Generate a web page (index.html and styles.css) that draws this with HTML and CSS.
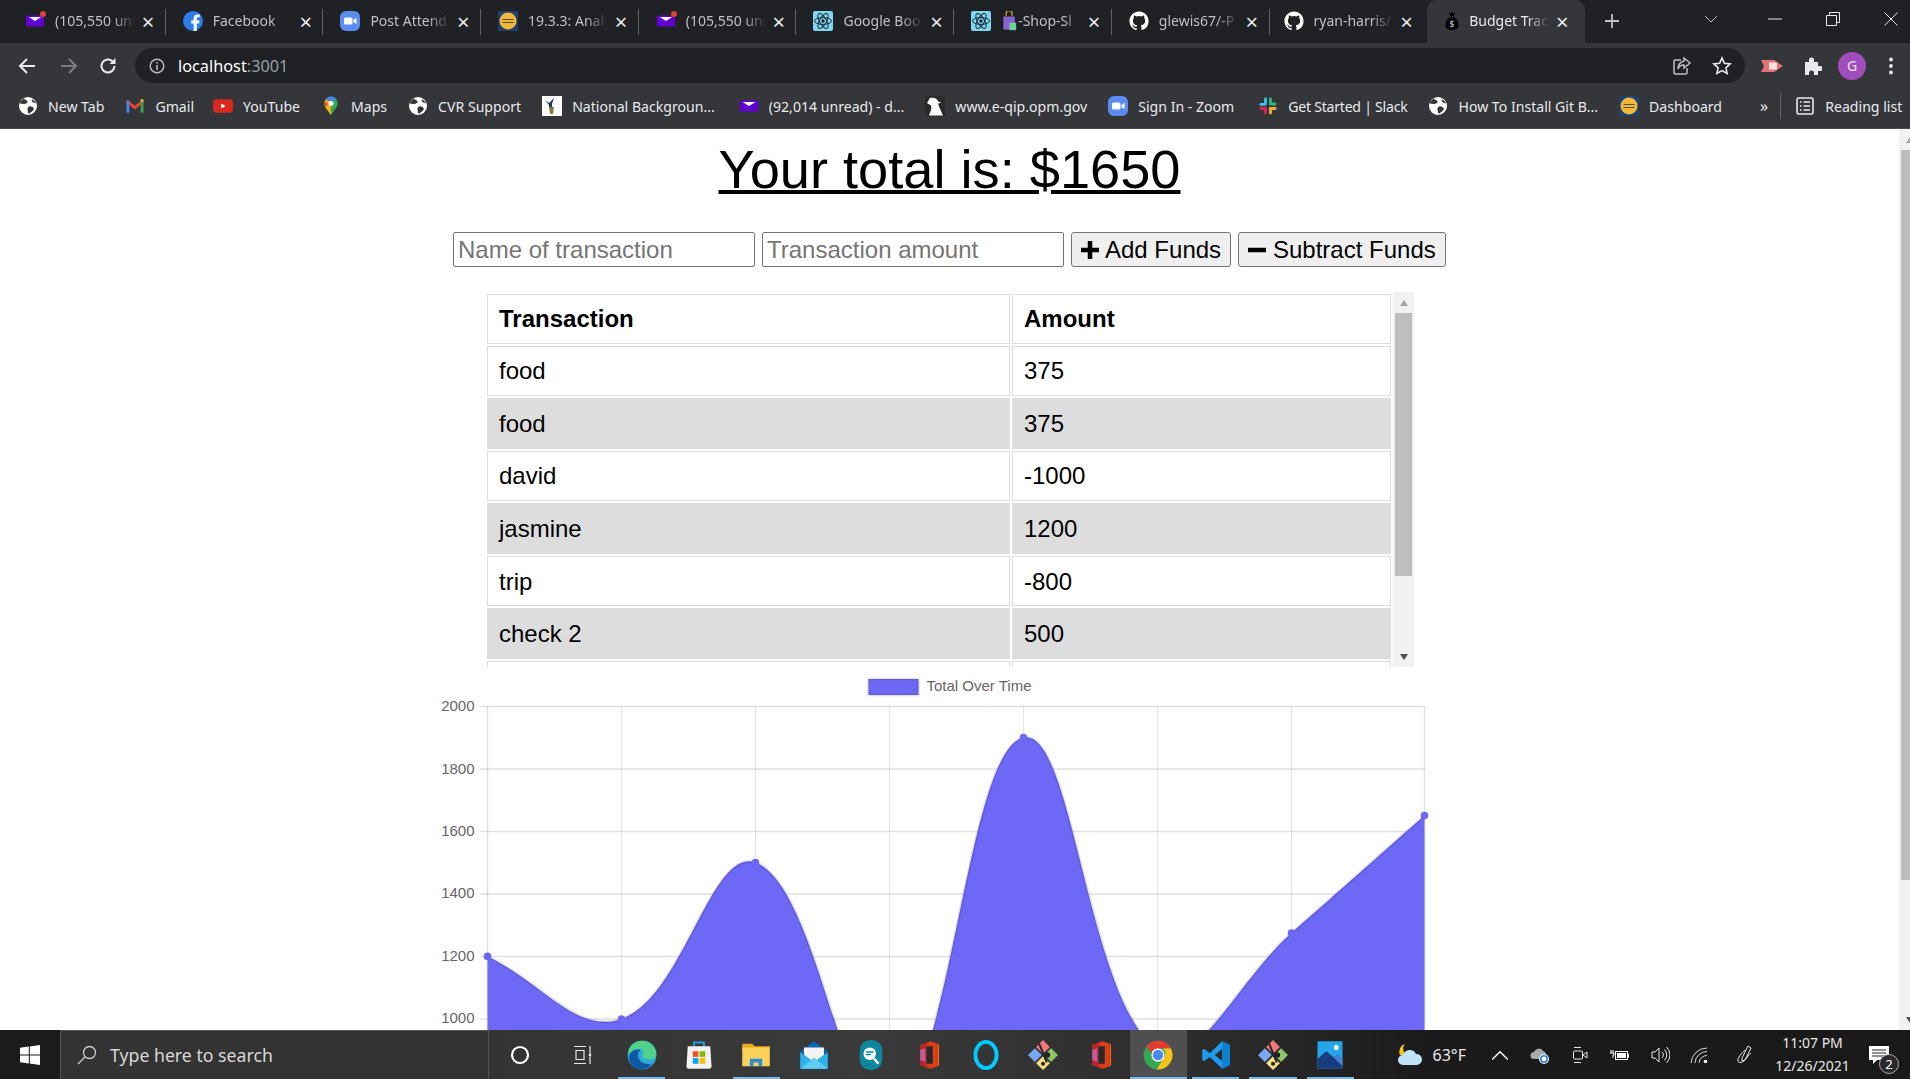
FILE: index.html
```html
<!DOCTYPE html>
<html lang="en">
  <head>
    <meta charset="UTF-8" />
    <title>Budget Tracker</title>
    <link rel="stylesheet" href="styles.css">
  </head>
  <body>
    <!-- shared icons -->
    <svg class="defs" aria-hidden="true">
      <symbol id="i-mail" viewBox="1 1 22 22"><rect x="2" y="6" width="20" height="12" fill="#6001d2"/><path d="M5 7.500h14l-7 4.500z" fill="#fff"/></symbol>
      <symbol id="i-zoom" viewBox="2 2 20 20"><rect x="2" y="2" width="20" height="20" rx="6" fill="#5b8cf0"/><rect x="6" y="8.500" width="8.500" height="7" rx="1.500" fill="#fff"/><path d="M15.500 11l3-2.200v6.400l-3-2.200z" fill="#fff"/></symbol>
      <symbol id="i-react" viewBox="2 2 20 20"><rect x="2" y="2" width="20" height="20" rx="2" fill="#7fd6f2"/><g fill="none" stroke="#1d2b33" stroke-width="1"><ellipse cx="12" cy="12" rx="8.500" ry="3.400"/><ellipse cx="12" cy="12" rx="8.500" ry="3.400" transform="rotate(60 12 12)"/><ellipse cx="12" cy="12" rx="8.500" ry="3.400" transform="rotate(120 12 12)"/></g><circle cx="12" cy="12" r="1.700" fill="#1d2b33"/></symbol>
      <symbol id="i-github" viewBox="0 0 24 24"><path fill="#fff" d="M12 .5C5.650.5.500 5.650.500 12c0 5.080 3.290 9.390 7.860 10.910.570.100.780-.250.780-.550v-1.930c-3.200.700-3.870-1.540-3.870-1.540-.520-1.330-1.280-1.680-1.280-1.680-1.050-.720.080-.700.080-.700 1.160.080 1.770 1.190 1.770 1.190 1.030 1.760 2.700 1.250 3.360.960.100-.750.400-1.250.730-1.540-2.550-.290-5.240-1.280-5.240-5.690 0-1.260.450-2.280 1.180-3.090-.120-.290-.510-1.460.110-3.050 0 0 .970-.310 3.170 1.180a11 11 0 0 1 5.780 0c2.200-1.490 3.170-1.180 3.170-1.180.630 1.590.230 2.760.110 3.050.740.810 1.180 1.830 1.180 3.090 0 4.420-2.690 5.390-5.250 5.680.410.360.780 1.050.780 2.120v3.140c0 .310.210.660.790.550A11.500 11.500 0 0 0 23.500 12C23.500 5.650 18.350.5 12 .5z"/></symbol>
      <symbol id="i-school" viewBox="2 2 20 20"><rect x="2" y="2" width="20" height="20" fill="#22406e"/><circle cx="12" cy="12" r="8.500" fill="#f0b93a"/><path d="M6.500 10.500h11M6.500 13.500h11" stroke="#5a4a20" stroke-width="1.200"/></symbol>
      <symbol id="i-globe" viewBox="2 2 20 20"><circle cx="12" cy="12" r="9" fill="#fff"/><path d="M8 4.500c1 1.500 3 1.500 3.500 3S9.500 10 8 10 5 9.500 3.500 9.500C4 7.500 6 5.500 8 4.500zM13 12.500c2-.500 3.500.500 4.500 1.500s-.500 3-2 4-2.500 2-3 1.500-.500-2-1-3.500.500-3 1.500-3.500zM16 5.500c1.500.500 3 2 4 3.500-1 .500-2.500 0-3.500-1s-1-2-.500-2.500z" fill="#35363a"/></symbol>
      <symbol id="i-office" viewBox="0 0 24 24"><path d="M13 1l7 2.500v17L13 23l6-2V3z" fill="#ff6a1a"/><path d="M13 1L5 4v16l8 3 6-2V3z" fill="#dc3e15"/><path d="M13 1L5 4v16l8 3-3-2.500V3.500z" fill="#b3262c"/><path d="M5 8l4-1.500v11L5 16z" fill="#c75a98"/><rect x="10" y="5" width="5" height="14" fill="#2a2a2a"/></symbol>
      <symbol id="i-git" viewBox="0 0 24 24"><path d="M12 0l5.500 5.500L12 11 6.500 5.500z" fill="#f0787a"/><path d="M0 12l5.500-5.500L11 12l-5.500 5.500z" fill="#7aa7f5"/><path d="M24 12l-5.500-5.500L13 12l5.500 5.500z" fill="#8cc665"/><path d="M12 24l-5.500-5.500L12 13l5.500 5.500z" fill="#f6df84"/><path d="M9 3l6 15" stroke="#222" stroke-width="1.600"/><circle cx="15.500" cy="12" r="2.200" fill="#222"/><circle cx="12" cy="19" r="1.600" fill="#222"/></symbol>
    </svg>

    <div class="tabstrip">
      <div class="tab">
        <svg class="fav"><use href="#i-mail"/></svg><i class="mail-dot"></i>
        <span class="tab-title">(105,550 unr</span><span class="tab-close">×</span>
      </div>
      <div class="tab">
        <svg class="fav" viewBox="0 0 24 24"><circle cx="12" cy="12" r="12" fill="#2f7bea"/><path d="M16.500 24V15h2.800l.500-3.600h-3.300V9.300c0-1 .400-1.800 1.800-1.800H20V4.300c-.300 0-1.400-.1-2.700-.1-2.700 0-4.500 1.600-4.500 4.600v2.600H9.800V15h3v9z" fill="#fff"/></svg>
        <span class="tab-title">Facebook</span><span class="tab-close">×</span>
      </div>
      <div class="tab">
        <svg class="fav"><use href="#i-zoom"/></svg>
        <span class="tab-title">Post Attend</span><span class="tab-close">×</span>
      </div>
      <div class="tab">
        <svg class="fav"><use href="#i-school"/></svg>
        <span class="tab-title">19.3.3: Analy</span><span class="tab-close">×</span>
      </div>
      <div class="tab">
        <svg class="fav"><use href="#i-mail"/></svg><i class="mail-dot"></i>
        <span class="tab-title">(105,550 unr</span><span class="tab-close">×</span>
      </div>
      <div class="tab">
        <svg class="fav"><use href="#i-react"/></svg>
        <span class="tab-title">Google Boo</span><span class="tab-close">×</span>
      </div>
      <div class="tab tab-shop">
        <svg class="fav"><use href="#i-react"/></svg>
        <svg class="bag" viewBox="0 0 20 24"><path d="M2 6h15v17H2z" fill="#8a63d2" stroke="#111"/><path d="M10 14h8v9h-8z" fill="#6fcf97"/><path d="M6 6V3a3 3 0 0 1 7 0v3" fill="none" stroke="#c9a227" stroke-width="1.500"/></svg>
        <span class="tab-title">-Shop-Sl</span><span class="tab-close">×</span>
      </div>
      <div class="tab">
        <svg class="fav"><use href="#i-github"/></svg>
        <span class="tab-title">glewis67/-P</span><span class="tab-close">×</span>
      </div>
      <div class="tab tab-nosep">
        <svg class="fav"><use href="#i-github"/></svg>
        <span class="tab-title">ryan-harris/</span><span class="tab-close">×</span>
      </div>
      <div class="tab tab-active">
        <svg class="fav" viewBox="0 0 24 24"><path d="M8.500 2h7l-1.500 4h-4zM9.500 7h5c3 2.500 5.500 6 5.500 10 0 4-3 5.500-8 5.500S4 21 4 17c0-4 2.500-7.500 5.500-10z" fill="#000"/><text class="bag-sign" x="12" y="19" text-anchor="middle">$</text></svg>
        <span class="tab-title">Budget Trac</span><span class="tab-close">×</span>
      </div>
      <svg class="new-tab" viewBox="0 0 14 14"><path d="M7 0v14M0 7h14" stroke="#bdc1c6" stroke-width="1.800"/></svg>
      <div class="window-controls">
        <svg class="win-btn win-down" viewBox="0 0 14 8"><path d="M1 1l6 6 6-6" fill="none" stroke="#bdc1c6"/></svg>
        <svg class="win-btn" viewBox="0 0 14 14"><path d="M0 7h14" stroke="#e8eaed"/></svg>
        <svg class="win-btn" viewBox="0 0 14 14"><path d="M.5 3.500h10v10H.5zM3.500 3.500v-3h10v10h-3" fill="none" stroke="#e8eaed"/></svg>
        <svg class="win-btn" viewBox="0 0 14 14"><path d="M.5.500l13 13M13.500.500l-13 13" stroke="#e8eaed"/></svg>
      </div>
    </div>

    <div class="toolbar">
      <svg class="tool" viewBox="0 0 18 18"><path d="M17 9H2M9 2L2 9l7 7" fill="none" stroke="#e8eaed" stroke-width="2"/></svg>
      <svg class="tool" viewBox="0 0 18 18"><path d="M1 9h15M9 2l7 7-7 7" fill="none" stroke="#7b7e83" stroke-width="2"/></svg>
      <svg class="tool" viewBox="0 0 18 18"><path d="M15.500 9a6.500 6.500 0 1 1-2-4.700" fill="none" stroke="#e8eaed" stroke-width="2"/><path d="M16.500 1v6h-6z" fill="#e8eaed"/></svg>
      <div class="omnibox">
        <svg class="omni-info" viewBox="0 0 16 16"><circle cx="8" cy="8" r="6.800" fill="none" stroke="#bdc1c6" stroke-width="1.400"/><path d="M8 7v5M8 4v1.600" stroke="#bdc1c6" stroke-width="1.500"/></svg>
        <span class="url">localhost<span class="url-port">:3001</span></span>
        <svg class="omni-share" viewBox="0 0 20 20"><path d="M9 4H3.500A1.500 1.500 0 0 0 2 5.500v11A1.500 1.500 0 0 0 3.500 18h10a1.500 1.500 0 0 0 1.500-1.500V12" fill="none" stroke="#bdc1c6" stroke-width="1.500"/><path d="M12 2l6 5-6 5V9c-3 0-5 1-6 4 0-4 2-7 6-8z" fill="none" stroke="#bdc1c6" stroke-width="1.500"/></svg>
        <svg class="omni-star" viewBox="0 0 20 20"><path d="M10 2l2.400 5.300 5.800.6-4.300 3.900 1.200 5.700-5.100-2.900-5.100 2.900 1.200-5.700L1.800 7.900l5.800-.6z" fill="none" stroke="#e8eaed" stroke-width="1.600"/></svg>
      </div>
      <svg class="ext-rec" viewBox="0 0 22 18"><path d="M0 3h10l3 0 9 6-9 6-3 0H0l3-6z" fill="#e57373"/><rect x="8" y="5.500" width="8" height="7" fill="#fbe3e3"/></svg>
      <svg class="ext-puzzle" viewBox="0 0 20 20"><path d="M3 6h4V4a2.500 2.500 0 0 1 5 0v2h4v4h2a2.500 2.500 0 0 1 0 5h-2v4H12v-2a2.500 2.500 0 0 0-5 0v2H3z" fill="#e8eaed"/></svg>
      <span class="avatar">G</span>
      <svg class="kebab" viewBox="0 0 4 18"><circle cx="2" cy="2.500" r="1.900" fill="#e8eaed"/><circle cx="2" cy="9" r="1.900" fill="#e8eaed"/><circle cx="2" cy="15.500" r="1.900" fill="#e8eaed"/></svg>
    </div>

    <div class="bookmarks">
      <a class="bm"><svg class="bm-ico"><use href="#i-globe"/></svg>New Tab</a>
      <a class="bm bm-near"><svg class="bm-ico" viewBox="0 0 24 24"><path d="M2 6l10 8 10-8" fill="none" stroke="#ea4335" stroke-width="3.500"/><path d="M3.500 6v14" stroke="#4285f4" stroke-width="3.500"/><path d="M20.500 6v14" stroke="#34a853" stroke-width="3.500"/><path d="M19 4.500l3 1.500" stroke="#fbbc04" stroke-width="3"/></svg>Gmail</a>
      <a class="bm"><svg class="bm-ico" viewBox="0 0 24 24"><rect x="0" y="4" width="24" height="16" rx="4" fill="#d9281e"/><path d="M10 9l5 3-5 3z" fill="#fff"/></svg>YouTube</a>
      <a class="bm"><svg class="bm-ico" viewBox="0 0 24 24"><path d="M12 1a8 8 0 0 0-8 8c0 5 5 9 8 14z" fill="#f5b400"/><path d="M12 1a8 8 0 0 1 8 8c0 5-5 9-8 14z" fill="#34a853"/><path d="M6 3.500A8 8 0 0 1 18 3l-2.500 3h-7z" fill="#4285f4"/><path d="M4.400 6.500l4 3L6 13c-1.500-2-2.500-4-1.600-6.500z" fill="#ea4335"/><circle cx="12" cy="9" r="3" fill="#fff"/></svg>Maps</a>
      <a class="bm"><svg class="bm-ico"><use href="#i-globe"/></svg>CVR Support</a>
      <a class="bm bm-far"><svg class="bm-ico" viewBox="2 2 20 20"><rect x="2" y="2" width="20" height="20" fill="#fff"/><path d="M5 6l4 3 5-5-2 6v4h-3v-3z" fill="#1f3864"/><path d="M9 13h5l-1 7h-3z" fill="#8a7a3a"/></svg>National Backgroun...</a>
      <a class="bm"><svg class="bm-ico"><use href="#i-mail"/></svg>(92,014 unread) - d...</a>
      <a class="bm"><svg class="bm-ico" viewBox="2 2 20 20"><rect x="2" y="2" width="20" height="20" fill="#2a2a2c"/><path d="M7 4c3-1 7 0 8 3l3 2-3 .5c1 4 4 9 5 12H6c1-3 3-6 2-10L4 9z" fill="#fff"/></svg>www.e-qip.opm.gov</a>
      <a class="bm bm-far"><svg class="bm-ico"><use href="#i-zoom"/></svg>Sign In - Zoom</a>
      <a class="bm bm-tight"><svg class="bm-ico" viewBox="0 0 24 24"><g stroke-width="3.500" stroke-linecap="round"><path d="M9 3.500v5" stroke="#36c5f0" /><path d="M3.500 10h5" stroke="#36c5f0"/><path d="M15 3.500v6" stroke="#2eb67d"/><path d="M15.500 9.500h5" stroke="#2eb67d"/><path d="M15 15h5.500" stroke="#ecb22e"/><path d="M15 15v5.500" stroke="#ecb22e"/><path d="M3.500 15H9" stroke="#e01e5a"/><path d="M9 15v5.500" stroke="#e01e5a"/></g></svg>Get Started | Slack</a>
      <a class="bm"><svg class="bm-ico"><use href="#i-globe"/></svg>How To Install Git B...</a>
      <a class="bm"><svg class="bm-ico"><use href="#i-school"/></svg>Dashboard</a>
      <span class="bm-more">»</span>
      <span class="bm-sep"></span>
      <a class="bm bm-reading"><svg class="bm-ico" viewBox="0 0 20 20"><rect x="2" y="2" width="16" height="16" rx="1.500" fill="none" stroke="#e8eaed" stroke-width="1.600"/><path d="M5 6h1.500M8.500 6H15M5 10h1.500M8.500 10H15M5 14h1.500M8.500 14H15" stroke="#e8eaed" stroke-width="1.500"/></svg>Reading list</a>
    </div>

    <div class="viewport">
      <main class="page">
        <h1 class="total">Your total is: $<span>1650</span></h1>

        <form class="entry-form">
          <input class="entry-input" type="text" placeholder="Name of transaction" />
          <input class="entry-input" type="text" placeholder="Transaction amount" />
          <button class="entry-btn btn-add" type="button"><svg class="btn-ico" viewBox="0 0 18 18"><path d="M9 0v18M0 9h18" stroke="#000" stroke-width="4.500"/></svg>Add Funds</button>
          <button class="entry-btn btn-sub" type="button"><svg class="btn-ico" viewBox="0 0 18 18"><path d="M0 9h18" stroke="#000" stroke-width="4.500"/></svg>Subtract Funds</button>
        </form>

        <div class="table-wrap">
          <div class="table-scroll">
            <table class="tx-table">
              <thead>
                <tr><th>Transaction</th><th>Amount</th></tr>
              </thead>
              <tbody>
                <tr><td>food</td><td>375</td></tr>
                <tr><td>food</td><td>375</td></tr>
                <tr><td>david</td><td>-1000</td></tr>
                <tr><td>jasmine</td><td>1200</td></tr>
                <tr><td>trip</td><td>-800</td></tr>
                <tr><td>check 2</td><td>500</td></tr>
                <tr><td></td><td></td></tr>
                <tr><td></td><td></td></tr>
              </tbody>
            </table>
          </div>
          <div class="vbar vbar-table">
            <span class="vbar-btn"><i class="arrow-up"></i></span>
            <span class="vbar-thumb"></span>
            <span class="vbar-rest"></span>
            <span class="vbar-btn"><i class="arrow-down"></i></span>
          </div>
        </div>

        <svg class="chart" viewBox="429.500 670 1040 553">
          <rect class="legend-box" x="868" y="679" width="50" height="16"/>
          <text class="legend-text" x="926" y="691">Total Over Time</text>

          <g class="grid-v">
            <path d="M621 706V1144M755 706V1144M889 706V1144M1023 706V1144M1157 706V1144M1291 706V1144"/>
          </g>
          <g class="grid-h">
            <path d="M479 706.500H1424M479 769H1424M479 831.500H1424M479 894H1424M479 956.500H1424M479 1019H1424M479 1081.500H1424M479 1144H1424"/>
            <path d="M487 706V1152M1424 706V1144"/>
          </g>
          <g class="axis-labels">
            <text x="474" y="711">2000</text>
            <text x="474" y="774">1800</text>
            <text x="474" y="836">1600</text>
            <text x="474" y="898">1400</text>
            <text x="474" y="961">1200</text>
            <text x="474" y="1023">1000</text>
          </g>

          <path class="area" d="M487 956.400C540.600 981.400 576.200 1034.700 621 1019C683.400 997.100 710 846.700 755 862.500C817.200 884.300 844.500 1133.700 889 1112.900C951.700 1083.600 965.100 751 1023 737.500C1072.300 726 1086.500 998.900 1157 1050.300C1193.700 1077.100 1237.600 979.900 1291 933C1344.400 886.100 1370.800 862.600 1424 815.600V1144H487Z"/>
          <path class="area-line" d="M487 956.400C540.600 981.400 576.200 1034.700 621 1019C683.400 997.100 710 846.700 755 862.500C817.200 884.300 844.500 1133.700 889 1112.900C951.700 1083.600 965.100 751 1023 737.500C1072.300 726 1086.500 998.900 1157 1050.300C1193.700 1077.100 1237.600 979.900 1291 933C1344.400 886.100 1370.800 862.600 1424 815.600"/>
          <g class="points">
            <circle cx="487" cy="956.400" r="3.800"/>
            <circle cx="621" cy="1019" r="3.800"/>
            <circle cx="755" cy="862.500" r="3.800"/>
            <circle cx="889" cy="1112.900" r="3.800"/>
            <circle cx="1023" cy="737.500" r="3.800"/>
            <circle cx="1157" cy="1050.300" r="3.800"/>
            <circle cx="1291" cy="933" r="3.800"/>
            <circle cx="1424" cy="815.600" r="3.800"/>
          </g>
        </svg>
      </main>

      <!-- page scrollbar runs off the right edge of the shot -->
      <div class="page-bar">
        <div class="vbar vbar-page">
          <span class="vbar-btn"><i class="arrow-up"></i></span>
          <span class="vbar-thumb"></span>
          <span class="vbar-rest"></span>
          <span class="vbar-btn"><i class="arrow-down"></i></span>
        </div>
      </div>
    </div>

    <div class="taskbar">
      <div class="start">
        <svg class="start-logo" viewBox="0 0 20 20"><path d="M0 2.800l8.800-1.200v8H0zM9.800 1.400L20 0v9.600H9.800zM0 10.600h8.800v7.900L0 17.300zM9.800 10.600H20V20L9.800 18.600z" fill="#fff"/></svg>
      </div>
      <div class="search">
        <svg class="search-ico" viewBox="0 0 20 20"><circle cx="12.500" cy="7.500" r="6" fill="none" stroke="#d0d0d0" stroke-width="1.300"/><path d="M8 12l-7 7" stroke="#d0d0d0" stroke-width="1.300"/></svg>
        <span class="search-text">Type here to search</span>
      </div>
      <div class="task-cell"><svg class="task-ico-sm" viewBox="0 0 20 20"><circle cx="10" cy="10" r="8" fill="none" stroke="#fff" stroke-width="2.200"/></svg></div>
      <div class="task-cell"><svg class="task-ico-sm" viewBox="0 0 20 20"><path d="M2 1.500h12M2 18.500h12M4 5.500h8v9H4zM18 1v8M18 12v7" fill="none" stroke="#e8e8e8" stroke-width="1.200"/><rect x="16.800" y="9" width="2.400" height="2.400" fill="#e8e8e8"/></svg></div>

      <div class="task-cell is-open"><svg class="task-ico" viewBox="0 0 24 24"><circle cx="12" cy="12" r="11.500" fill="#2fa9dc"/><path d="M12 .500C19 .500 23.500 5.500 23.500 11c0 3-3 4.500-6 4.500s-5-1-5-3c0-2 1.500-3 1.500-3C11 6 4 7 1.500 13 0 6 5 .500 12 .500z" fill="#4ed18a"/><path d="M1.500 13C3 8 8 7 11 8c-3 2-3 6 0 9 2 2 6 3 9 1.500-2 3-5 5-8.500 5C6 23.500 1.500 19 1.500 13z" fill="#0c59a4"/></svg></div>
      <div class="task-cell"><svg class="task-ico" viewBox="0 0 24 24"><path d="M8 6V2h8v4" fill="none" stroke="#1fa2e0" stroke-width="1.500"/><path d="M3 5h18l1 16a2 2 0 0 1-2 2H4a2 2 0 0 1-2-2z" fill="#f3f3f3"/><rect x="7" y="9" width="4.500" height="4.500" fill="#f25022"/><rect x="12.500" y="9" width="4.500" height="4.500" fill="#7fba00"/><rect x="7" y="14.500" width="4.500" height="4.500" fill="#00a4ef"/><rect x="12.500" y="14.500" width="4.500" height="4.500" fill="#ffb900"/></svg></div>
      <div class="task-cell is-open"><svg class="task-ico" viewBox="0 0 24 24"><path d="M1 3h8l2 2h12v3H1z" fill="#e8a81e"/><rect x="1" y="6" width="22" height="15" fill="#fbd35c"/><path d="M7 21v-6h10v6h-3v-3h-4v3z" fill="#2c8fd6"/></svg></div>
      <div class="task-cell"><svg class="task-ico" viewBox="0 0 24 24"><path d="M12 1l11 8v14H1V9z" fill="#0b62b0"/><path d="M4 6h16v6l-8 6-8-6z" fill="#f4f4f4"/><path d="M1 10l11 8 11-8v13H1z" fill="#29b4ee"/><path d="M1 23l11-9 11 9z" fill="#5fcbf5"/></svg></div>
      <div class="task-cell"><svg class="task-ico" viewBox="0 0 24 24"><rect x="3" y="0" width="18" height="24" rx="8" fill="#0f859e"/><circle cx="11" cy="11" r="5" fill="#fff"/><path d="M8 9.500h6M8 11.500h4" stroke="#0f859e" stroke-width="1.200"/><path d="M14.500 15l3.500 4" stroke="#fff" stroke-width="2"/></svg></div>
      <div class="task-cell"><svg class="task-ico"><use href="#i-office"/></svg></div>
      <div class="task-cell"><svg class="task-ico" viewBox="0 0 24 24"><ellipse cx="12" cy="12" rx="8.500" ry="10.500" fill="none" stroke="#00caff" stroke-width="3"/><path d="M9 22l3 2 .5-3z" fill="#00caff"/></svg></div>
      <div class="task-cell"><svg class="task-ico"><use href="#i-git"/></svg></div>
      <div class="task-cell"><svg class="task-ico"><use href="#i-office"/></svg></div>
      <div class="task-cell is-open is-active"><svg class="task-ico" viewBox="0 0 24 24"><circle cx="12" cy="12" r="11.500" fill="#34a853"/><path d="M12 .500a11.500 11.500 0 0 1 10.300 6.300H12a5.200 5.200 0 0 0-5 3.500L2.700 5.300A11.500 11.500 0 0 1 12 .500z" fill="#e33b2e"/><path d="M22.300 6.800A11.500 11.500 0 0 1 11 23.500l5-8.500a5.200 5.200 0 0 0 0-8.200z" fill="#fbc116"/><circle cx="12" cy="12" r="5.300" fill="#fff"/><circle cx="12" cy="12" r="4.200" fill="#4a8af4"/></svg></div>
      <div class="task-cell is-open"><svg class="task-ico" viewBox="0 0 24 24"><path d="M17 1l6 3v16l-6 3-10-9.500L2.500 17 1 16v-8l1.500-1L7 10.500zM17 7l-6 5 6 5z" fill="#1f9cf0"/><path d="M17 1l6 3v16l-6 3z" fill="#0f7fcf"/></svg></div>
      <div class="task-cell is-open"><svg class="task-ico"><use href="#i-git"/></svg></div>
      <div class="task-cell is-open"><svg class="task-ico" viewBox="0 0 24 24"><rect x="2" y="1" width="20" height="22" fill="#25a4e8"/><path d="M2 23V15l7-6 6 5 3-2 4 4v7z" fill="#173d80"/><path d="M15 14l3-2 4 4v5z" fill="#4a7ed0"/><ellipse cx="17" cy="6" rx="1.800" ry="2.200" fill="#fff"/></svg></div>

      <div class="tray">
        <div class="tray-weather">
          <svg class="weather-ico" viewBox="0 0 28 24"><path d="M9 1a7 7 0 0 0 2 11l-7 0a8 8 0 0 1 5-11z" fill="#f5c518"/><path d="M7 22a5 5 0 0 1 0-10 7 7 0 0 1 13-1 5.500 5.500 0 0 1 1 11z" fill="#bfe3f7"/></svg>
          <span>63°F</span>
        </div>
        <div class="tray-cell"><svg class="tray-ico" viewBox="0 0 18 18"><path d="M2 13l7-7 7 7" fill="none" stroke="#fff" stroke-width="1.300"/></svg></div>
        <div class="tray-cell"><svg class="tray-ico" viewBox="0 0 20 20"><path d="M4 14a3.500 3.500 0 0 1 0-7 5 5 0 0 1 9-1 4 4 0 0 1 3 3v5z" fill="#a9a9a9"/><circle cx="14" cy="14" r="5" fill="#fff"/><circle cx="14" cy="14" r="3.200" fill="none" stroke="#1b78d0" stroke-width="1.500"/></svg></div>
        <div class="tray-cell"><svg class="tray-ico" viewBox="0 0 18 20"><path d="M3 2.500h7M3 17.500h7" stroke="#e8e8e8"/><rect x="2.500" y="6" width="9" height="8" rx="1" fill="none" stroke="#e8e8e8"/><path d="M12 10l4-3v6z" fill="none" stroke="#e8e8e8"/></svg></div>
        <div class="tray-cell"><svg class="tray-ico" viewBox="0 0 20 16"><path d="M1 3v3M3 3v3M0 6h4v2H3v3" fill="none" stroke="#fff"/><rect x="5.500" y="4.500" width="12" height="8" fill="none" stroke="#fff"/><rect x="7" y="6" width="9" height="5" fill="#fff"/><path d="M18.500 6.500v4" stroke="#fff"/></svg></div>
        <div class="tray-cell"><svg class="tray-ico" viewBox="0 0 20 20"><path d="M2 7h3l4-4v14l-4-4H2z" fill="none" stroke="#e8e8e8"/><path d="M12 7a4 4 0 0 1 0 6M14.500 4.500a8 8 0 0 1 0 11M16.500 2a11 11 0 0 1 0 16" fill="none" stroke="#e8e8e8"/></svg></div>
        <div class="tray-cell"><svg class="tray-ico" viewBox="0 0 20 20"><path d="M1 18A16 16 0 0 1 17 3M5 18A12 12 0 0 1 17 6.500M9 18a8 8 0 0 1 8-7.500" fill="none" stroke="#d8d8d8"/><circle cx="15.500" cy="16.500" r="1.800" fill="#fff"/></svg></div>
        <div class="tray-cell tray-pen"><svg class="tray-ico" viewBox="0 0 20 20"><path d="M13 1l3 2-6 12-3 1 0-3zM10 5c-3 3-8 8-7 11s5 1 7-1 4-6 6-7" fill="none" stroke="#e8e8e8"/></svg></div>
        <div class="clock"><span>11:07 PM</span><span>12/26/2021</span></div>
        <div class="notif">
          <svg class="notif-ico" viewBox="0 0 20 20"><path d="M0 1h20v14H8l-4 4v-4H0z" fill="#fff"/><path d="M3 5h14M3 8h14M3 11h14" stroke="#222"/></svg>
          <span class="notif-badge">2</span>
        </div>
      </div>
    </div>
  </body>
</html>
```

FILE: styles.css
```css
* {
  box-sizing: border-box;
}

html,
body {
  margin: 0;
  height: 100%;
  overflow: hidden;
}

body {
  display: flex;
  flex-direction: column;
  font-family: "Liberation Sans", Arial, sans-serif;
  background: #fff;
}

.defs {
  position: absolute;
  width: 0;
  height: 0;
}

/* browser tabs */
.tabstrip {
  flex: 0 0 43px;
  display: flex;
  align-items: center;
  padding-left: 8px;
  background: #202124;
  font-family: "Noto Sans", sans-serif;
}

.tab {
  position: relative;
  flex: 0 0 157.700px;
  height: 43px;
  display: flex;
  align-items: center;
  padding: 0 0 2px 17px;
  color: #bdc1c6;
  font-size: 14px;
}

.tab::after {
  content: "";
  position: absolute;
  right: 0;
  top: 9px;
  width: 1px;
  height: 26px;
  background: #5f6368;
}

.tab-nosep {
  padding-left: 14px;
}

.tab-nosep::after,
.tab-active::after {
  display: none;
}

.tab-active {
  padding-left: 15px;
  background: #35363a;
  border-radius: 10px 10px 0 0;
  color: #e8eaed;
}

.tab-active .tab-title {
  margin-left: 7px;
}

.fav {
  flex: 0 0 20px;
  width: 20px;
  height: 20px;
}

.mail-dot {
  position: absolute;
  left: 32px;
  top: 11px;
  width: 6px;
  height: 6px;
  border-radius: 50%;
  background: #e0403a;
}

.tab-title {
  flex: 0 0 82px;
  margin-left: 10px;
  overflow: hidden;
  white-space: nowrap;
  -webkit-mask-image: linear-gradient(to right, #000 70%, transparent 98%);
  mask-image: linear-gradient(to right, #000 70%, transparent 98%);
}

.tab-close {
  flex: 0 0 20px;
  margin-left: 1px;
  text-align: center;
  color: #e8eaed;
  font-size: 22px;
  line-height: 20px;
}

.tab-shop .bag {
  flex: 0 0 17px;
  width: 17px;
  height: 20px;
  margin-left: 10px;
}

.tab-shop .tab-title {
  flex-basis: 65px;
  margin-left: 0;
}

.bag-sign {
  fill: #ddd;
  font-size: 10px;
}

.new-tab {
  width: 14px;
  height: 14px;
  margin: 0 0 2px 20px;
}

.window-controls {
  margin-left: auto;
  display: flex;
  align-items: center;
  align-self: flex-start;
  height: 37px;
}

.win-btn {
  width: 14px;
  height: 14px;
  margin-right: 44px;
}

.win-down {
  margin-right: 50px;
  height: 8px;
}

.window-controls .win-btn:last-child {
  margin-right: 12px;
}

/* address bar row */
.toolbar {
  flex: 0 0 45px;
  display: flex;
  align-items: center;
  padding-left: 18px;
  background: #35363a;
}

.tool {
  width: 18px;
  height: 18px;
  margin-right: 24px;
}

.tool:nth-child(2) {
  margin-right: 21px;
}

.tool:nth-child(3) {
  margin-right: 18px;
}

.omnibox {
  width: 1610px;
  height: 35px;
  display: flex;
  align-items: center;
  padding-left: 14px;
  border-radius: 18px;
  background: #202124;
  font-family: "Noto Sans", sans-serif;
}

.omni-info {
  width: 16px;
  height: 16px;
}

.url {
  margin-left: 13px;
  color: #fff;
  font-size: 16.300px;
}

.url-port {
  color: #9aa0a6;
}

.omni-share {
  width: 20px;
  height: 20px;
  margin-left: auto;
}

.omni-star {
  width: 20px;
  height: 20px;
  margin: 0 13px 0 20px;
}

.ext-rec {
  width: 22px;
  height: 18px;
  margin-left: 16px;
}

.ext-puzzle {
  width: 20px;
  height: 20px;
  margin-left: 19px;
}

.avatar {
  width: 28px;
  height: 28px;
  margin-left: 16px;
  border-radius: 50%;
  background: #a24dbd;
  color: #e8eaed;
  font: 14px/28px "Noto Sans", sans-serif;
  text-align: center;
}

.kebab {
  width: 4px;
  height: 18px;
  margin-left: 23px;
}

/* bookmarks bar */
.bookmarks {
  flex: 0 0 41px;
  display: flex;
  align-items: center;
  padding: 0 0 4px 18px;
  border-bottom: 1px solid #4a4b4f;
  background: #35363a;
  color: #e8eaed;
  font-family: "Noto Sans", sans-serif;
  font-size: 14.100px;
}

.bm {
  display: flex;
  align-items: center;
  margin-right: 21px;
  white-space: nowrap;
}

.bm-near {
  margin-right: 19px;
}

.bm-far {
  margin-right: 24px;
}

.bm-tight {
  letter-spacing: -0.250px;
}

.bm-ico {
  flex: 0 0 20px;
  width: 20px;
  height: 20px;
  margin-right: 10px;
}

.bm-more {
  margin-left: 17px;
  font-size: 16px;
}

.bm-sep {
  width: 1px;
  height: 26px;
  margin-left: 12px;
  background: #5f6368;
}

.bm-reading {
  margin: 0 0 0 14px;
}

/* page content */
.viewport {
  flex: 1 1 0;
  min-height: 0;
  display: flex;
}

.page {
  flex: 1 1 0;
  min-width: 0;
  overflow: hidden;
  padding-top: 9px;
  background: #fff;
}

.page-bar {
  flex: 0 0 11px;
  overflow: hidden;
}

/* scrollbars are drawn by hand, the shot has no native ones */
.vbar {
  flex: 0 0 21px;
  width: 21px;
  height: 100%;
  display: flex;
  flex-direction: column;
  background: #f1f1f1;
}

.vbar-btn {
  flex: 0 0 21px;
  display: flex;
  align-items: center;
  justify-content: center;
}

.vbar-thumb {
  margin: 0 2px;
  background: #bebebe;
}

.vbar-table .vbar-thumb {
  flex: 0 0 263px;
}

.vbar-page .vbar-thumb {
  flex: 0 0 730px;
}

.vbar-rest {
  flex: 1 1 0;
}

.arrow-up {
  border: 4.500px solid transparent;
  border-top: 0;
  border-bottom: 6px solid #a3a3a3;
}

.arrow-down {
  border: 4.500px solid transparent;
  border-bottom: 0;
  border-top: 6px solid #505050;
}

.total {
  margin: 0;
  text-align: center;
  font-size: 54.200px;
  line-height: 62px;
  font-weight: 400;
  text-decoration: underline;
  text-decoration-thickness: 4px;
}

.entry-form {
  display: flex;
  justify-content: center;
  gap: 7px;
  margin-top: 32px;
}

.entry-input {
  width: 302px;
  height: 35px;
  padding: 1px 4px 0;
  border: 1px solid #767676;
  border-radius: 2px;
  font-family: "Liberation Sans", Arial, sans-serif;
  font-size: 24px;
}

.entry-input::placeholder {
  color: #757575;
}

.entry-btn {
  height: 35px;
  display: flex;
  align-items: center;
  padding: 0 9px;
  border: 1px solid #767676;
  border-radius: 3px;
  background: #efefef;
  color: #000;
  font-family: "Liberation Sans", Arial, sans-serif;
  font-size: 24px;
  white-space: nowrap;
}

.btn-add {
  width: 160px;
}

.btn-sub {
  width: 208px;
}

.btn-ico {
  flex: 0 0 18px;
  width: 18px;
  height: 18px;
  margin-right: 6px;
}

.btn-sub .btn-ico {
  margin-right: 7px;
}

.table-wrap {
  width: 929px;
  height: 375px;
  margin: 25px auto 0;
  display: flex;
}

.table-scroll {
  flex: 1 1 0;
  min-width: 0;
  overflow: hidden;
}

.tx-table {
  width: 908px;
  table-layout: fixed;
  border-spacing: 2.500px;
  font-size: 24px;
}

.tx-table th,
.tx-table td {
  height: 50.600px;
  padding: 1px 11px 0;
  border: 1px solid #ddd;
  text-align: left;
}

.tx-table th:first-child {
  width: 523px;
}

.tx-table th {
  height: 49.500px;
  padding-top: 0;
}

.tx-table tbody tr:nth-child(even) {
  background: #ddd;
}

/* chart */
.chart {
  display: block;
  width: 1040px;
  height: 553px;
  margin: 3px auto 0;
  font-size: 15px;
}

.legend-box {
  fill: #6d68f5;
  stroke: rgba(0, 0, 0, 0.1);
  stroke-width: 3;
}

.legend-text,
.axis-labels {
  fill: #666;
}

.axis-labels {
  text-anchor: end;
}

.grid-v path {
  fill: none;
  stroke: rgba(0, 0, 0, 0.1);
  stroke-width: 1;
}

.grid-h path {
  fill: none;
  stroke: rgba(0, 0, 0, 0.12);
  stroke-width: 1.500;
}

.area {
  fill: #6d68f5;
}

.area-line {
  fill: none;
  stroke: rgba(0, 0, 0, 0.1);
  stroke-width: 3;
}

.points circle {
  fill: #6d68f5;
}

/* windows taskbar */
.taskbar {
  flex: 0 0 49px;
  display: flex;
  align-items: stretch;
  background: linear-gradient(to right, #333 25%, #3a3a3a 45%, #2a2a2a 65%, #1a1a1a 75%);
}

.start {
  flex: 0 0 60px;
  display: flex;
  align-items: center;
  justify-content: center;
  background: #1b1b1b;
}

.start-logo {
  width: 20px;
  height: 20px;
}

.search {
  flex: 0 0 429px;
  display: flex;
  align-items: center;
  padding-left: 16px;
  border: 1px solid #555;
  border-bottom: 0;
  background: #333;
  font-family: "Noto Sans", sans-serif;
}

.search-ico {
  width: 20px;
  height: 20px;
}

.search-text {
  margin-left: 13px;
  color: #d8d8d8;
  font-size: 17.700px;
}

.task-cell {
  position: relative;
  flex: 0 0 57.400px;
  display: flex;
  align-items: center;
  justify-content: center;
}

.task-cell:nth-child(3),
.task-cell:nth-child(4) {
  flex-basis: 62px;
}

.task-ico {
  width: 30px;
  height: 30px;
}

.task-ico-sm {
  width: 20px;
  height: 20px;
}

.is-active {
  background: #4f4f4f;
}

.is-open::after {
  content: "";
  position: absolute;
  left: 5px;
  right: 5px;
  bottom: 0;
  height: 2px;
  background: #76b9ed;
}

.is-active::after {
  left: 0;
  right: 0;
}

.tray {
  flex: 1 1 0;
  display: flex;
  align-items: center;
  justify-content: flex-end;
  padding-right: 9px;
  color: #e8e8e8;
  font-family: "Noto Sans", sans-serif;
}

.tray-weather {
  display: flex;
  align-items: center;
  gap: 9px;
  margin-right: 14px;
  font-size: 16px;
}

.weather-ico {
  width: 28px;
  height: 24px;
}

.tray-cell {
  flex: 0 0 40px;
  display: flex;
  justify-content: center;
}

.tray-ico {
  width: 20px;
  height: 20px;
}

.tray-pen {
  margin-left: 5px;
}

.clock {
  flex: 0 0 95px;
  display: flex;
  flex-direction: column;
  align-items: center;
  gap: 3px;
  font-size: 14px;
  line-height: 20px;
}

.notif {
  position: relative;
  flex: 0 0 41px;
  height: 49px;
}

.notif-ico {
  position: absolute;
  left: 9px;
  top: 15px;
  width: 20px;
  height: 20px;
}

.notif-badge {
  position: absolute;
  left: 19px;
  top: 24px;
  width: 20px;
  height: 20px;
  border: 1px solid #aaa;
  border-radius: 50%;
  background: #2a2a2a;
  color: #fff;
  font-size: 13px;
  line-height: 18px;
  text-align: center;
}
```
